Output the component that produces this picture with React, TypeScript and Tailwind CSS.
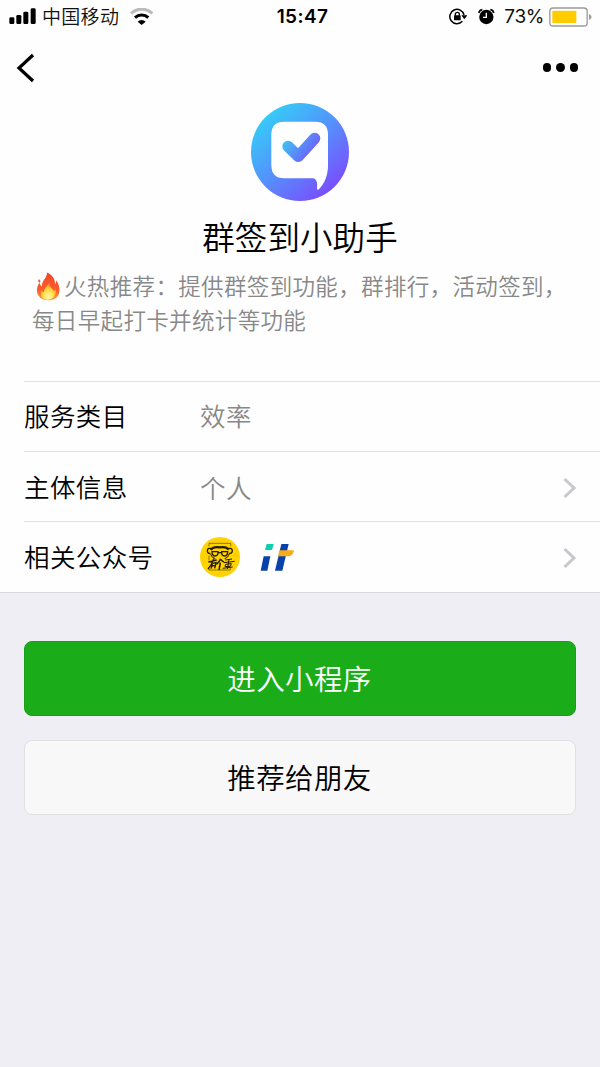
import type { ReactNode } from "react";

const CJK = "font-['Noto_Sans_CJK_SC',sans-serif] font-[350]";

function Signal() {
  return (
    <svg width="27" height="17" viewBox="0 0 81 51" className="shrink-0">
      <rect x="1" y="28" width="15" height="20" rx="4" />
      <rect x="22" y="21" width="15" height="27" rx="4" />
      <rect x="43" y="11" width="15" height="37" rx="4" />
      <rect x="65" y="1" width="15" height="47" rx="4" />
    </svg>
  );
}

function Wifi() {
  return (
    <svg width="24" height="17" viewBox="390 22 72 51" fill="none" className="shrink-0">
      <path d="M393 38 A47 47 0 0 1 457 38" stroke="#bbbbbb" strokeWidth="9" />
      <path d="M405 51 A29 29 0 0 1 445 51" stroke="#000" strokeWidth="9" />
      <path d="M413 63 A17 17 0 0 1 437 63 L425 73 Z" fill="#000" />
    </svg>
  );
}

function RotationLock() {
  return (
    <svg width="18" height="17" viewBox="60 22 54 51" fill="none" className="shrink-0">
      <path d="M100 62 A21.500 21.500 0 1 1 105 43" stroke="#000" strokeWidth="4.500" />
      <path d="M97 44 H115 L106 56 Z" fill="#000" />
      <rect x="75" y="44" width="20" height="15" rx="2" fill="#000" />
      <path d="M79 45 V41 A6 6 0 0 1 91 41 V45" stroke="#000" strokeWidth="4" />
    </svg>
  );
}

function Alarm() {
  return (
    <svg width="17" height="17" viewBox="146 22 51 51" fill="none" className="shrink-0">
      <circle cx="171" cy="49" r="21.500" fill="#000" />
      <path d="M149 37 Q150 28 159 27" stroke="#000" strokeWidth="5" />
      <path d="M183 27 Q192 28 193 37" stroke="#000" strokeWidth="5" />
      <path d="M171 36 V50 H161" stroke="#fff" strokeWidth="4" />
    </svg>
  );
}

function Battery() {
  return (
    <svg width="43" height="20" viewBox="356 19 129 60" fill="none" className="shrink-0">
      <rect x="358.500" y="22" width="112" height="54" rx="10" stroke="#9b9b9b" strokeWidth="4" />
      <rect x="366" y="30" width="72" height="37" rx="2" fill="#ffcc00" />
      <path d="M476 40 Q484 44 484 49 Q484 54 476 58 Z" fill="#9b9b9b" />
    </svg>
  );
}

function AppLogo() {
  return (
    <svg width="98" height="98" viewBox="34 24 294 294" fill="none">
      <defs>
        <linearGradient id="disc" x1="75" y1="60" x2="275" y2="290" gradientUnits="userSpaceOnUse">
          <stop offset="0" stopColor="#35cdf8" />
          <stop offset="0.5" stopColor="#5590fb" />
          <stop offset="1" stopColor="#7a4dff" />
        </linearGradient>
        <linearGradient id="tick" x1="135" y1="140" x2="205" y2="190" gradientUnits="userSpaceOnUse">
          <stop offset="0" stopColor="#3cc0f5" />
          <stop offset="1" stopColor="#6e63fa" />
        </linearGradient>
      </defs>
      <circle cx="181" cy="171" r="147" fill="url(#disc)" />
      <path
        d="M134 80 H226 Q265 80 265 119 V211 C265 242 254 268 236 284 Q231 285 232 278 C234 266 231 250 220 250 H134 Q95 250 95 211 V119 Q95 80 134 80 Z"
        fill="#fff"
      />
      <path
        d="M145 154 L176 184 L225 130"
        stroke="url(#tick)"
        strokeWidth="34"
        strokeLinecap="round"
        strokeLinejoin="round"
      />
    </svg>
  );
}

function Flame() {
  return (
    <svg width="24" height="29" viewBox="48 184 72 86">
      <defs>
        <linearGradient id="fire" x1="0" y1="0" x2="0" y2="1">
          <stop offset="0" stopColor="#f0482c" />
          <stop offset="0.6" stopColor="#fb5a2c" />
          <stop offset="1" stopColor="#fba030" />
        </linearGradient>
        <radialGradient id="core" cx="0.5" cy="0.85" r="0.75">
          <stop offset="0" stopColor="#fffab0" />
          <stop offset="0.5" stopColor="#ffdc40" />
          <stop offset="1" stopColor="#fd7a2c" />
        </radialGradient>
      </defs>
      <path
        d="M81 185 C99 193 106 207 105 221 Q109 217 108 208 C117 218 120 234 118 244 C115 260 101 268 84 268 C66 268 53 258 51 243 C50 232 53 223 59 216 Q60 225 66 228 C63 210 82 202 81 185 Z"
        fill="url(#fire)"
      />
      <path d="M56 205 Q64 208 60 216 Q52 213 56 205 Z" fill="#f4583a" />
      <path
        d="M88 210 C84 229 99 232 102 241 Q106 239 106 234 C112 250 100 267 84 267 C68 267 58 254 65 238 Q67 244 72 244 C70 231 86 226 88 210 Z"
        fill="url(#core)"
      />
    </svg>
  );
}

function MascotAvatar() {
  return (
    <svg width="40" height="40" viewBox="30 22 120 120" fill="none" stroke="#231b05">
      <circle cx="90" cy="82" r="60" fill="#ffd200" stroke="none" />
      <path d="M57 50 V41 H122 V50 M57 78 V92 M57 116 V121 H121 V114" strokeWidth="1.500" />
      {/* head and glasses */}
      <path d="M62 60 Q70 50 89 53 Q110 50 116 60" strokeWidth="7" />
      <path d="M63 57 Q52 53 52 64 Q53 72 61 72 M115 57 Q127 53 127 64 Q126 72 117 72" strokeWidth="4" />
      <path d="M66 66 H84 Q85 79 75 79 Q66 78 66 66 Z M95 66 H113 Q113 78 104 79 Q94 79 95 66 Z M84 69 H95" strokeWidth="4" />
      <path d="M61 72 Q65 85 76 87 M104 87 Q114 85 118 72" strokeWidth="3" />
      {/* brush strokes */}
      <path d="M55 97 L80 91 M71 87 Q66 105 54 118 M67 102 L63 117 M68 101 L78 99 L74 116 M66 109 L75 107" strokeWidth="4" />
      <path d="M92 87 Q88 97 79 104 M92 89 Q96 95 102 97 M91 99 L87 121" strokeWidth="4.500" />
      <path d="M106 91 L126 88 M102 99 L134 95 M107 104 L124 102 L121 110 L105 111 Z M117 89 L112 118 M98 116 L128 112" strokeWidth="3" />
    </svg>
  );
}

function ItAvatar() {
  return (
    <svg width="36" height="30" viewBox="212 39 108 90" className="mt-0.5">
      <path d="M232 42 H253 L248 60 H227 Z" fill="#0ccfb0" />
      <path d="M223 79 H243 L234 122 H214 Z" fill="#0841aa" />
      <path d="M276 42 H298 L279 122 H257 Z" fill="#0841aa" />
      <path d="M270 61 H314 Q311 79 297 79 H266 Z" fill="#faab18" />
    </svg>
  );
}

function Chevron() {
  return (
    <svg width="14" height="22" viewBox="0 0 14 22" fill="none" className="mt-0.5 mr-[23px] ml-auto">
      <path d="M1.500 2 L11 11 L1.500 20" stroke="#c7c7cc" strokeWidth="3" />
    </svg>
  );
}

function Row({ label, arrow, children }: { label: string; arrow?: boolean; children: ReactNode }) {
  return (
    <div className="ml-6 flex h-[70.2px] items-center border-t border-[#e2e2e2] text-[25.500px] tracking-[0.4px]">
      <span className="w-44 shrink-0 pb-0.5 text-black">{label}</span>
      {children}
      {arrow && <Chevron />}
    </div>
  );
}

export default function App() {
  return (
    <div className={`flex h-[1067px] w-[600px] flex-col overflow-hidden bg-[#efeef4] ${CJK}`}>
      <div className="h-[593px] border-b border-[#d9d9dc] bg-[#fefefe]">
        {/* Status bar */}
        <div className="grid h-8 grid-cols-[1fr_auto_1fr] items-center pt-px pr-2 pl-[9px]">
          <div className="flex items-center">
            <Signal />
            <span className="ml-1.5 pb-px text-[19px] leading-6 tracking-[0.3px] text-[#111]">中国移动</span>
            <span className="ml-[11px]">
              <Wifi />
            </span>
          </div>
          <span className="pt-0.5 pl-1 font-[Inter,sans-serif] text-[19px] font-semibold tracking-[0.4px]">15:47</span>
          <div className="flex items-center justify-end">
            <RotationLock />
            <span className="ml-[11px]">
              <Alarm />
            </span>
            <span className="mr-[5px] ml-[9px] pt-0.5 font-[Inter,sans-serif] text-[19px] font-normal tracking-[-0.4px] text-[#111]">
              73%
            </span>
            <Battery />
          </div>
        </div>

        {/* Nav bar */}
        <div className="flex h-[71px] items-center justify-between pr-[22px] pl-[15px]">
          <svg width="20" height="30" viewBox="0 0 20 30" fill="none">
            <path d="M18 2 L4 15 L18 28" stroke="#000" strokeWidth="3.200" />
          </svg>
          <div className="flex gap-[5px]">
            <i className="size-[8.500px] rounded-full bg-black" />
            <i className="size-[8.500px] rounded-full bg-black" />
            <i className="size-[8.500px] rounded-full bg-black" />
          </div>
        </div>

        {/* Profile */}
        <div className="flex h-[278px] flex-col items-center">
          <AppLogo />
          <h1 className="mt-[11px] text-[32.500px] leading-[48px] tracking-[0.1px] text-black">群签到小助手</h1>
          <p className="mt-2 w-full pr-8 pl-8 text-[22.500px] leading-[34px] tracking-[0.35px] text-[#888]">
            <span className="flex h-[34px] items-center whitespace-nowrap">
              <span className="mr-1 ml-1 flex pt-0.5">
                <Flame />
              </span>
              火热推荐：提供群签到功能，群排行，活动签到，
            </span>
            每日早起打卡并统计等功能
          </p>
        </div>

        {/* Info list */}
        <Row label="服务类目">
          <span className="pb-0.5 text-[#888]">效率</span>
        </Row>
        <Row label="主体信息" arrow>
          <span className="text-[#888]">个人</span>
        </Row>
        <Row label="相关公众号" arrow>
          <div className="flex items-center gap-5">
            <MascotAvatar />
            <ItAvatar />
          </div>
        </Row>
      </div>

      {/* Actions */}
      <div className="flex flex-col gap-6 px-6 pt-12">
        <button className="h-[75px] rounded-lg border border-[#1a9e1a] bg-[#1aad19] pr-px text-[28.500px] tracking-[0.4px] text-white">
          进入小程序
        </button>
        <button className="h-[75px] rounded-lg border border-[#e0e0e2] bg-[#f8f8f8] pr-px text-[28.500px] tracking-[0.4px] text-black">
          推荐给朋友
        </button>
      </div>
    </div>
  );
}
